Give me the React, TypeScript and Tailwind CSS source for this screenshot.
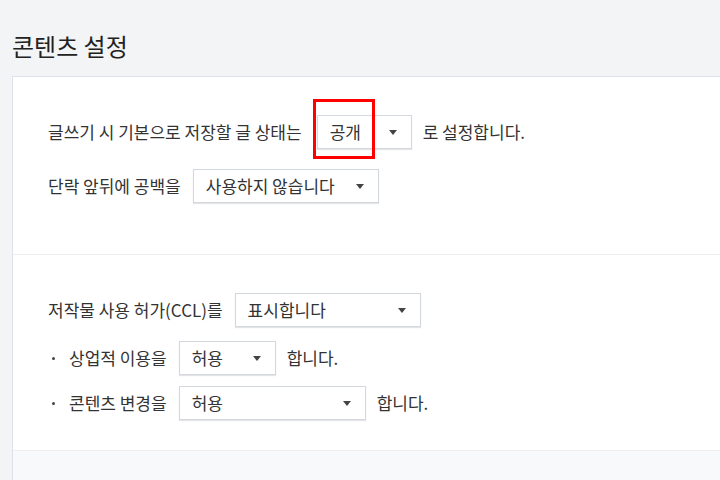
import React from 'react';

const font = { fontFamily: '"Noto Sans CJK KR", "Noto Sans", sans-serif' };

function Select({ value, width }: { value: string; width: string }) {
    return (
        <div
            className={`${width} h-[34px] flex items-center justify-between pl-[12px] pr-[14px] bg-white border border-[#d3d7de] shadow-[0_1px_1px_rgba(0,0,0,0.1)] text-[17px] text-[#333]`}
        >
            <span>{value}</span>
            <svg width="8" height="5" viewBox="0 0 8 5" className="shrink-0">
                <path d="M0 0h8L4 5z" fill="#444" />
            </svg>
        </div>
    );
}

function Bullet() {
    return <span className="inline-block w-[3px] h-[3px] bg-[#444] rounded-full ml-[4px] mr-[2px]" />;
}

export default function App() {
    return (
        <div className="min-h-screen bg-[#f3f4f6] pl-3 pt-[30px] flex flex-col text-[#333]" style={font}>
            <h1 className="text-[24px] leading-[32px] text-[#222] mb-[14px]">콘텐츠 설정</h1>

            <div className="flex-1 flex flex-col bg-white border-l border-t border-[#dde1ea]">
                {/* 기본 설정 */}
                <div className="pl-[35px] pt-[38px] pb-[51px] flex flex-col gap-[20px] border-b border-[#eeeeee]">
                    <div className="flex items-center gap-3 text-[17px]">
                        <span>글쓰기 시 기본으로 저장할 글 상태는</span>
                        <div className="relative ml-[3px]">
                            <Select value="공개" width="w-[95px]" />
                            <div className="absolute left-[-4px] top-[-16px] w-[62px] h-[60px] border-[3px] border-[#ff0000] pointer-events-none" />
                        </div>
                        <span className="-ml-px">로 설정합니다.</span>
                    </div>
                    <div className="flex items-center gap-3 text-[17px]">
                        <span>단락 앞뒤에 공백을</span>
                        <Select value="사용하지 않습니다" width="w-[186px]" />
                    </div>
                </div>

                {/* CCL */}
                <div className="pl-[35px] pt-[38px] pb-[30px] flex flex-col border-b border-[#eeeeee]">
                    <div className="flex items-center gap-3 text-[17px]">
                        <span>저작물 사용 허가(CCL)를</span>
                        <Select value="표시합니다" width="w-[186px]" />
                    </div>
                    <div className="flex items-center gap-3 text-[17px] mt-[14px]">
                        <span className="flex items-center gap-[12px]">
                            <Bullet />
                            상업적 이용을
                        </span>
                        <Select value="허용" width="w-[97px]" />
                        <span className="-ml-px">합니다.</span>
                    </div>
                    <div className="flex items-center gap-3 text-[17px] mt-[11px]">
                        <span className="flex items-center gap-[12px]">
                            <Bullet />
                            콘텐츠 변경을
                        </span>
                        <Select value="허용" width="w-[187px]" />
                        <span className="-ml-px">합니다.</span>
                    </div>
                </div>

                <div className="flex-1 bg-[#f8f9fb]" />
            </div>
        </div>
    );
}
